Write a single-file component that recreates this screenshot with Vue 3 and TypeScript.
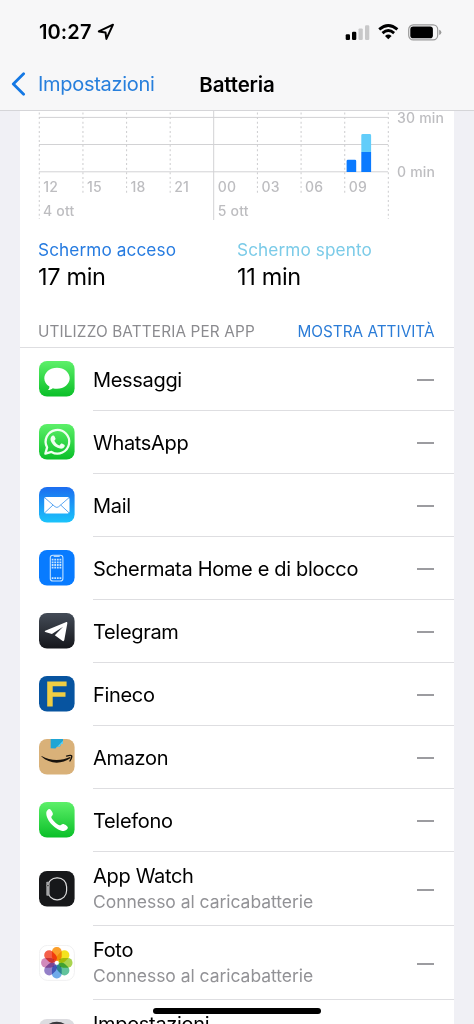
<script setup lang="ts">
interface AppRow {
  id: string
  name: string
  note?: string
  tall?: boolean
}

const hours = ['12', '15', '18', '21', '00', '03', '06', '09']

const charging = 'Connesso al caricabatterie'

const apps: AppRow[] = [
  { id: 'messages', name: 'Messaggi' },
  { id: 'whatsapp', name: 'WhatsApp' },
  { id: 'mail', name: 'Mail' },
  { id: 'home', name: 'Schermata Home e di blocco' },
  { id: 'telegram', name: 'Telegram' },
  { id: 'fineco', name: 'Fineco' },
  { id: 'amazon', name: 'Amazon' },
  { id: 'phone', name: 'Telefono' },
  { id: 'watch', name: 'App Watch', note: charging, tall: true },
  { id: 'photos', name: 'Foto', note: charging, tall: true },
  { id: 'settings', name: 'Impostazioni', tall: true },
]

const petals = ['#fb9f2b', '#f3e320', '#a9d450', '#62c39c', '#6fabea', '#9480c8', '#d28abb', '#f4604a']

// x of the n-th three-hour mark in the chart
function markX(n: number): number {
  return 19.3 + n * 43.63
}
</script>

<template>
  <div class="screen">
    <header class="header">
      <div class="status">
        <span class="clock">10:27</span>
        <svg class="location" width="18" height="18" viewBox="0 0 18 18">
          <path d="M1.8 8.4 16 1.7 9.4 15.9 8.5 9.4Z" fill="none" stroke="#000" stroke-width="2" stroke-linejoin="round" />
        </svg>
        <svg class="signal" width="25" height="16" viewBox="0 0 25 16">
          <rect x="0.7" y="9.2" width="4.3" height="5.8" rx="1.2" />
          <rect x="7" y="6.8" width="4.3" height="8.2" rx="1.2" />
          <rect x="13.5" y="3.4" width="4.3" height="11.6" rx="1.2" fill="#c8c8c9" />
          <rect x="20" y="0.2" width="4.3" height="14.8" rx="1.2" fill="#c8c8c9" />
        </svg>
        <svg class="wifi" width="21" height="16" viewBox="0 0 21 16">
          <g fill="none" stroke="#000" stroke-width="2.8">
            <path d="M1.2 5.4Q10.3-2.4 19.4 5.4" />
            <path d="M4.5 9.1Q10.3 4 16.1 9.1" />
          </g>
          <path d="M7 11.9Q10.3 9 13.6 11.9L10.3 15.2Z" />
        </svg>
        <svg class="battery" width="34" height="17" viewBox="0 0 34 17">
          <rect x="0.7" y="0.9" width="29" height="15" rx="4.6" fill="none" stroke="#999" stroke-width="1.2" />
          <rect x="2.3" y="2.6" width="22.6" height="11.6" rx="2.8" />
          <path d="M31.2 5.8Q33.4 6.6 33.4 8.4T31.2 11Z" fill="#999" />
        </svg>
      </div>
      <nav class="nav">
        <div class="back">
          <svg width="15" height="24" viewBox="0 0 15 24">
            <path d="M12.6 1.7 2.3 12 12.6 22.3" fill="none" stroke="#1478e4" stroke-width="2.8" stroke-linecap="round" stroke-linejoin="round" />
          </svg>
          <span class="back-label">Impostazioni</span>
        </div>
        <h1 class="title">Batteria</h1>
      </nav>
    </header>

    <main class="card">
      <svg class="chart" width="434" height="115" viewBox="0 0 434 115">
        <g stroke="#d2d2d4" stroke-width="1">
          <path v-for="y in [6.4, 33.5, 60.8]" :key="y" :d="`M19 ${y}H368`" />
          <path d="M193.7 0V109" />
        </g>
        <g stroke="#d0d0d2" stroke-width="1.1" stroke-dasharray="2 2.6">
          <template v-for="n in 9" :key="n">
            <path v-if="n !== 5" :d="`M${markX(n - 1)} 1.5V${n === 1 || n === 9 ? 108 : 83}`" />
          </template>
        </g>
        <path d="M326.6 61V50q0-1.3 1.3-1.3h7q1.3 0 1.3 1.3v11Z" fill="#0a7aff" />
        <path d="M341.3 41V24.4q0-1.3 1.3-1.3h7.2q1.3 0 1.3 1.3V41Z" fill="#62cdfa" />
        <rect x="341.3" y="41" width="9.8" height="20" fill="#0a7aff" />
        <g class="chart-text">
          <text v-for="(hour, i) in hours" :key="hour" :x="markX(i) + 4" y="81">{{ hour }}</text>
          <text x="23" y="105.3">4 ott</text>
          <text x="197.8" y="105.3">5 ott</text>
          <text x="377" y="11.8">30 min</text>
          <text x="377" y="66.3">0 min</text>
        </g>
      </svg>

      <section class="totals">
        <div class="total">
          <div class="total-label on">Schermo acceso</div>
          <div class="total-value">17 min</div>
        </div>
        <div class="total">
          <div class="total-label off">Schermo spento</div>
          <div class="total-value">11 min</div>
        </div>
      </section>

      <div class="list-head">
        <span class="list-title">UTILIZZO BATTERIA PER APP</span>
        <span class="list-toggle">MOSTRA ATTIVITÀ</span>
      </div>

      <ul class="list">
        <li v-for="app in apps" :key="app.id" class="row" :class="{ tall: app.tall }">
          <svg class="icon" width="36" height="36" viewBox="0 0 36 36">
            <defs>
              <linearGradient id="green" x2="0" y2="1">
                <stop stop-color="#5df069" /><stop offset="1" stop-color="#0abf28" />
              </linearGradient>
              <linearGradient id="sky" x2="0" y2="1">
                <stop stop-color="#1c6df0" /><stop offset="1" stop-color="#1bc4fb" />
              </linearGradient>
              <linearGradient id="slate" x2="0" y2="1">
                <stop stop-color="#444c57" /><stop offset="1" stop-color="#15161b" />
              </linearGradient>
            </defs>

            <template v-if="app.id === 'messages'">
              <rect width="35.6" height="35.6" rx="8" fill="url(#green)" />
              <path d="M18 6.8c7.1 0 12.7 4.7 12.7 10.5S25.1 27.8 18 27.8c-1.5 0-2.9-.2-4.2-.6-1.2 1-2.9 1.8-4.9 1.8 1.1-.9 1.6-2 1.5-3.4C7.3 23.7 5.3 20.7 5.3 17.3 5.3 11.5 10.9 6.8 18 6.8Z" fill="#fff" />
            </template>

            <template v-else-if="app.id === 'whatsapp'">
              <rect width="35.6" height="35.6" rx="8" fill="url(#green)" />
              <path d="M6.4 29.6 8.1 23.4A11.8 11.8 0 1 1 12.5 27.9Z" fill="none" stroke="#effff0" stroke-width="2.3" stroke-linejoin="round" />
              <path d="M13.7 11.6c.8-.3 1.5-.1 1.9.8l.9 2.2c.2.6-.2 1.1-1.2 2.2 1.2 2.3 2.9 3.8 5.1 4.7l1.5-1.7c.3-.4.7-.4 1.1-.2l2.3 1.2c.7.4.5 1.3.2 2-1 1.8-3.2 2.3-5.4 1.5-4.2-1.3-7.5-4.6-8.5-8.1-.4-1.8.4-3.9 2.1-4.6Z" fill="#effff0" />
            </template>

            <template v-else-if="app.id === 'mail'">
              <rect width="35.6" height="35.6" rx="8" fill="url(#sky)" />
              <rect x="5.2" y="10" width="25.3" height="16.4" rx="2" fill="#fff" />
              <path d="M5.7 10.7 16 19.7Q17.9 21.2 19.7 19.7L30 10.7M5.7 25.8 14 18M30 25.8 21.7 18" fill="none" stroke="#4b9df0" stroke-width="0.9" />
            </template>

            <template v-else-if="app.id === 'home'">
              <rect width="35.6" height="35.6" rx="8" fill="#087bff" />
              <rect x="11.3" y="5.2" width="12.6" height="25.8" rx="2.6" fill="none" stroke="#c6e4ff" stroke-width="1.1" />
              <path d="M14.7 5.6h6v1.3h-6Z" fill="#c6e4ff" />
              <g stroke="#c6e4ff" stroke-width="1.8" stroke-dasharray="1.8 0.8">
                <path v-for="y in [9.6, 12.3, 15, 17.7, 28.2]" :key="y" :d="`M12.7 ${y}H22.5`" />
              </g>
            </template>

            <template v-else-if="app.id === 'telegram'">
              <rect width="35.6" height="35.6" rx="8" fill="url(#slate)" />
              <path d="M6.2 17.8 26.8 9.2c1-.4 1.7.1 1.5 1.3L25.3 27c-.2 1.2-1.1 1.5-2 .8l-7.5-5.5 8.3-8.5-11.2 7.2-6.6-2q-1.3-.6-.1-1.2Z" fill="#fff" />
            </template>

            <template v-else-if="app.id === 'fineco'">
              <rect width="35.6" height="35.6" rx="8" fill="#0754a0" />
              <path d="M8.2 5.5H27.6v4.7H13.7v6H26.5v4.6H13.7v9.7H8.2Z" fill="#efcd43" />
            </template>

            <template v-else-if="app.id === 'amazon'">
              <rect width="35.6" height="35.6" rx="8" fill="#d9b179" />
              <path d="M11.7 0H24v4.5l-2 .6-1 2.4-3 .3-1.6 1.8-4.7-.4Z" fill="#1fa5d4" />
              <path d="m18.2 7.7 5.8-6v3l-2.2.6-.9 2.2Z" fill="#66d0ee" />
              <path d="M2.6 16.9C11.3 21.9 21.8 22.1 31 18l.6 1.1C22.3 25.6 10.7 25.1 2.4 17.6Z" fill="#17120d" />
              <path d="M27.6 17.1c3-1.1 5.6-1.1 5.1.8-.3 1.6-.8 2.9-1.7 4" fill="none" stroke="#17120d" stroke-width="1.4" stroke-linecap="round" />
            </template>

            <template v-else-if="app.id === 'phone'">
              <rect width="35.6" height="35.6" rx="8" fill="url(#green)" />
              <path d="M7.3 10.5c.2-1.7 1.7-3.4 3.1-3.5 1.2-.1 3.5 3.4 3.5 4.9 0 1.6-1.7 2.2-1.6 3.4.4 2.2 5.5 7.3 8.1 8 1.4.4 2.1-1.4 3.6-1.4 1.6 0 5 2.4 4.9 3.7-.1 1.7-2.1 3.3-4.2 3.4C17.5 29 6.7 18.7 7.3 10.5Z" fill="#fff" />
            </template>

            <template v-else-if="app.id === 'watch'">
              <rect width="35.6" height="35.6" rx="8" fill="#17181a" />
              <rect x="8.8" y="6.8" width="18.8" height="22" rx="9" fill="none" stroke="#dedede" stroke-width="1.2" />
              <rect x="7.3" y="10.8" width="3.3" height="14" rx="0.8" fill="#a4a5a7" />
              <circle cx="8.9" cy="14.6" r="1.2" fill="#444" stroke="#ccc" stroke-width="0.5" />
            </template>

            <template v-else-if="app.id === 'photos'">
              <rect x="0.4" y="0.4" width="35" height="35" rx="8" fill="#fff" stroke="#ececee" stroke-width="0.8" />
              <g class="petals">
                <rect
                  v-for="(color, i) in petals"
                  :key="color"
                  x="12.9"
                  y="2.1"
                  width="9.8"
                  height="13.8"
                  rx="4.7"
                  :fill="color"
                  :transform="`rotate(${i * 45} 17.8 17.8)`"
                />
              </g>
            </template>

            <template v-else>
              <rect width="35.6" height="35.6" rx="8" fill="#dcdce0" />
              <circle cx="17.8" cy="17.8" r="13.8" fill="#8e8e93" stroke="#3a3a3e" stroke-width="2.5" />
            </template>
          </svg>

          <div class="body">
            <div class="text">
              <div class="name">{{ app.name }}</div>
              <div v-if="app.note" class="note">{{ app.note }}</div>
            </div>
            <span class="dash"></span>
          </div>
        </li>
      </ul>
    </main>

    <div class="home-bar"></div>
  </div>
</template>

<style>
body {
  background: #f0f0f5;
}
</style>

<style scoped>
.screen {
  position: relative;
  width: 474px;
  height: 1024px;
  overflow: hidden;
  background: #f0f0f5;
  color: #000;
  font-family: Inter, "Liberation Sans", sans-serif;
}

.header {
  box-sizing: border-box;
  height: 111px;
  background: #f7f7f8;
  border-bottom: 1px solid #d5d5d8;
}

.status {
  display: flex;
  align-items: center;
  height: 62px;
  padding: 1px 33px 0 39px;
}

.clock {
  width: 58px;
  font-size: 20px;
  font-weight: 600;
  letter-spacing: 0.1px;
  white-space: nowrap;
}

.signal {
  margin: 1px 8px 0 auto;
}

.wifi {
  margin-right: 9px;
}

.battery {
  margin-right: -1px;
}

.nav {
  display: grid;
  grid-template-columns: 1fr auto 1fr;
  align-items: center;
  height: 42px;
}

.back {
  display: flex;
  align-items: center;
  gap: 12px;
  padding-left: 11px;
}

.back-label {
  color: #277fdc;
  font-size: 20px;
  letter-spacing: -0.3px;
}

.title {
  margin: 0;
  font-size: 20.5px;
  font-weight: 600;
  letter-spacing: -0.15px;
}

.card {
  width: 433.5px;
  margin-left: 20px;
  background: #fff;
}

.chart {
  display: block;
}

.chart-text {
  fill: #bdbdc0;
  font-size: 14px;
  font-weight: 500;
  letter-spacing: 0.2px;
}

.totals {
  display: flex;
  height: 89px;
  padding-left: 18px;
}

.total {
  width: 199px;
  padding-top: 13px;
}

.total-label {
  font-size: 17.2px;
  line-height: 22px;
  letter-spacing: 0.1px;
}

.on {
  color: #267be0;
}

.off {
  color: #7bcbe8;
}

.total-value {
  margin-top: 1px;
  font-size: 23.5px;
  line-height: 30px;
  letter-spacing: -0.35px;
}

.list-head {
  display: flex;
  justify-content: space-between;
  box-sizing: border-box;
  height: 33px;
  padding: 7px 19px 0 18px;
  border-bottom: 1px solid #dedee1;
  font-size: 15.3px;
  line-height: 20px;
}

.list-title {
  color: #8b8b8f;
  letter-spacing: 0.15px;
}

.list-toggle {
  color: #2b7cd7;
  letter-spacing: 0.02px;
}

.list {
  margin: 0;
  padding: 0;
  list-style: none;
}

.row {
  display: flex;
  align-items: center;
  height: 63px;
  padding-left: 19px;
}

.row.tall {
  height: 74px;
}

.icon {
  flex: none;
  margin: -1px 18px 0 0;
}

.petals {
  isolation: isolate;
}

.petals rect {
  mix-blend-mode: multiply;
}

.body {
  display: flex;
  flex: 1;
  align-items: center;
  justify-content: space-between;
  box-sizing: border-box;
  height: 100%;
  padding-right: 20px;
  border-bottom: 1px solid #dedee1;
}

.text {
  padding-top: 2px;
}

.tall .text {
  align-self: flex-start;
  padding-top: 11px;
}

.name {
  font-size: 20px;
  line-height: 26px;
  letter-spacing: -0.32px;
  white-space: nowrap;
}

.note {
  margin-top: 1px;
  color: #929296;
  font-size: 17.5px;
  line-height: 24px;
  letter-spacing: -0.04px;
}

.dash {
  width: 16.5px;
  height: 2px;
  margin-top: 2px;
  background: #9c9ca0;
}

.home-bar {
  position: absolute;
  bottom: 10px;
  left: 153px;
  width: 168px;
  height: 6px;
  border-radius: 3px;
  background: #000;
}
</style>
